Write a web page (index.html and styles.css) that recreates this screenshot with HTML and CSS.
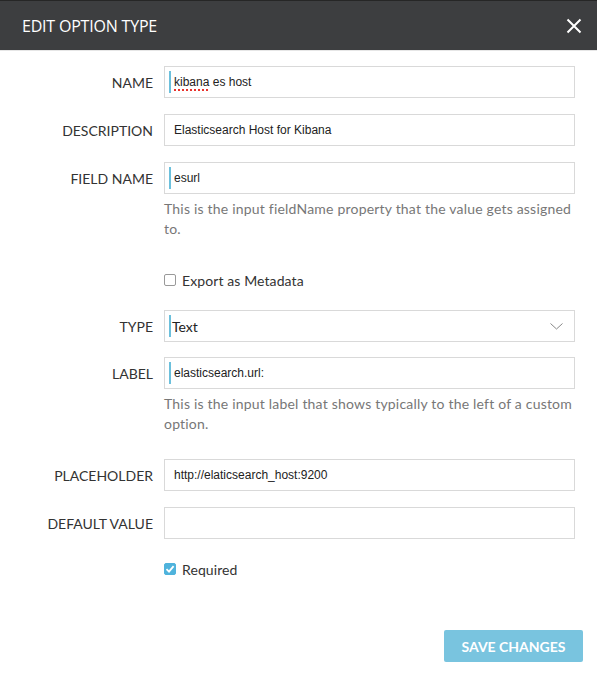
FILE: index.html
```html
<!DOCTYPE html>
<html>
<head>
<meta charset="utf-8">
<link rel="stylesheet" href="styles.css">
</head>
<body>
<div class="modal">
  <div class="modal-header">
    <span class="modal-title">EDIT OPTION TYPE</span>
    <svg class="close" width="16" height="16" viewBox="0 0 16 16"><path d="M1.5 1.5 L14.5 14.5 M14.5 1.5 L1.5 14.5" stroke="#fff" stroke-width="2" fill="none"/></svg>
  </div>
  <div class="modal-body">
    <div class="row">
      <label class="lbl">NAME</label>
      <div class="field"><span class="marker"></span><span class="val"><span class="spell">kibana</span> es host</span></div>
    </div>
    <div class="row">
      <label class="lbl">DESCRIPTION</label>
      <div class="field"><span class="val">Elasticsearch Host for Kibana</span></div>
    </div>
    <div class="row">
      <label class="lbl">FIELD NAME</label>
      <div class="field"><span class="marker"></span><span class="val">esurl</span></div>
    </div>
    <div class="row help-row">
      <span class="lbl"></span>
      <p class="help">This is the input fieldName property that the value gets assigned to.</p>
    </div>
    <div class="row check-row check-export">
      <span class="lbl"></span>
      <div class="check"><span class="box"></span><span>Export as Metadata</span></div>
    </div>
    <div class="row row-type">
      <label class="lbl">TYPE</label>
      <div class="field select"><span class="marker"></span><span class="val sel-val">Text</span>
        <svg class="chev" width="13" height="7" viewBox="0 0 13 7"><path d="M0.5 0.5 L6.5 6 L12.5 0.5" stroke="#888" stroke-width="1" fill="none"/></svg>
      </div>
    </div>
    <div class="row">
      <label class="lbl">LABEL</label>
      <div class="field"><span class="marker"></span><span class="val">elasticsearch.url:</span></div>
    </div>
    <div class="row help-row">
      <span class="lbl"></span>
      <p class="help">This is the input label that shows typically to the left of a custom option.</p>
    </div>
    <div class="row row-placeholder">
      <label class="lbl">PLACEHOLDER</label>
      <div class="field"><span class="val">http://elaticsearch_host:9200</span></div>
    </div>
    <div class="row">
      <label class="lbl">DEFAULT VALUE</label>
      <div class="field"><span class="val"></span></div>
    </div>
    <div class="row check-row check-required">
      <span class="lbl"></span>
      <div class="check"><span class="box checked"><svg width="10" height="10" viewBox="0 0 10 10"><path d="M1.5 5.2 L4 7.6 L8.6 2.2" stroke="#fff" stroke-width="1.8" fill="none"/></svg></span><span>Required</span></div>
    </div>
  </div>
  <div class="modal-footer">
    <button class="btn-save">SAVE CHANGES</button>
  </div>
</div>
</body>
</html>
```
FILE: styles.css
```css
* { box-sizing: border-box; }
html, body { margin: 0; padding: 0; background: #fff; }
body { font-family: Lato, "Open Sans", sans-serif; color: #333; }
.modal { width: 597px; height: 675px; display: flex; flex-direction: column; background: #fff; }
.modal-header {
  height: 51px;
  background: #3d3e40;
  border-top: 1px solid #262626;
  border-bottom: 1px solid #e6e6e6;
  display: flex; align-items: center; justify-content: space-between;
  padding: 0 15px 0 22px;
}
.modal-title { color: #fff; font-family: "Open Sans", sans-serif; font-size: 16px; letter-spacing: -0.2px; }
.close { display: block; }
.modal-body { padding: 15px 22px 0 22px; flex: 1; }
.row { display: flex; align-items: center; gap: 11px; margin-bottom: 16px; }
.lbl { width: 131px; flex: none; text-align: right; font-size: 14px; color: #333; }
.field {
  flex: 1; height: 32px; border: 1px solid #d9d9d9; background: #fff;
  display: flex; align-items: center; position: relative;
  padding-left: 9px;
}
.marker { position: absolute; left: 4px; top: 4px; bottom: 4px; width: 2px; background: #6cc0dc; }
.val { font-family: "Liberation Sans", Arial, sans-serif; font-size: 12px; color: #222; }
.spell { text-decoration-line: underline; text-decoration-style: dotted; text-decoration-color: #e8322c; text-underline-offset: 3px; text-decoration-thickness: 2px; }
.sel-val { font-family: Lato, sans-serif; font-size: 14px; color: #222; margin-left: -2px; }
.chev { position: absolute; right: 11px; top: 12px; }
.help-row { align-items: flex-start; margin-top: -11px; }
.help { margin: 0; flex: 1; font-size: 14px; line-height: 20px; color: #777; letter-spacing: 0.2px; }
.check-row { margin-top: 31px; margin-bottom: 20px; }
.check { display: flex; align-items: center; gap: 6px; font-size: 14px; color: #333; height: 20px; letter-spacing: 0.1px; }
.box { width: 12px; height: 12px; border: 1px solid #999; border-radius: 2px; display: flex; align-items: center; justify-content: center; background: #fff; }
.box.checked { background: #4fb3dc; border-color: #4fb3dc; }
.row-type { margin-bottom: 15px; }
.row-placeholder { margin-top: 25px; }
.check-required { margin-top: 20px; }
.modal-footer { display: flex; justify-content: flex-end; padding: 0 14px 13px 0; }
.btn-save {
  width: 139px; height: 32px; border: none; border-radius: 2px;
  background: #79c4df; color: #fff; font-family: Lato, sans-serif; font-weight: bold; font-size: 14px;
  padding: 0;
}
```
